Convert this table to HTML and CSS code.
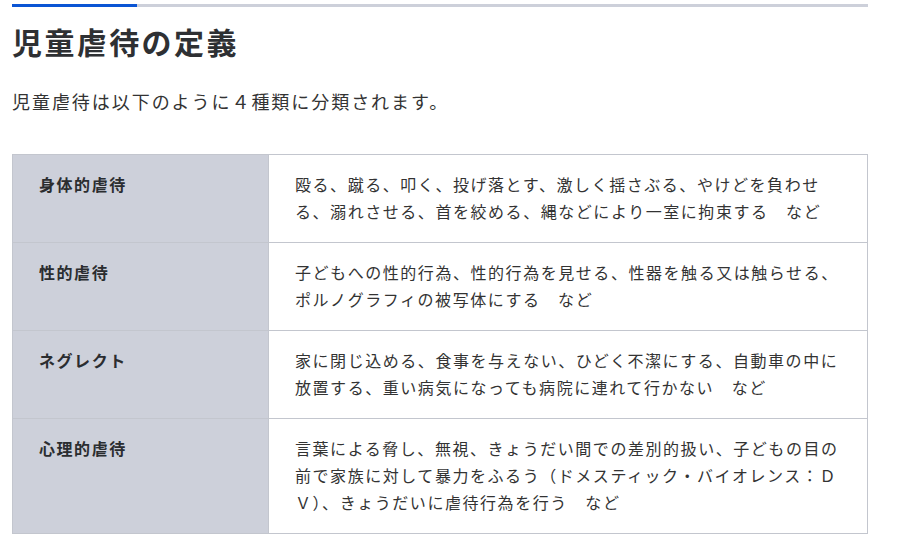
FILE: index.html
```html
<!DOCTYPE html>
<html lang="ja">
<head>
<meta charset="utf-8">
<link rel="stylesheet" href="styles.css">
</head>
<body>
<section class="page">
  <div class="bar"><span class="bar-accent"></span><span class="bar-rest"></span></div>
  <h2 class="title">児童虐待の定義</h2>
  <p class="lead">児童虐待は以下のように４種類に分類されます。</p>
  <table class="defs">
    <tr>
      <th>身体的虐待</th>
      <td>殴る、蹴る、叩く、投げ落とす、激しく揺さぶる、やけどを負わせる、溺れさせる、首を絞める、縄などにより一室に拘束する　など</td>
    </tr>
    <tr>
      <th>性的虐待</th>
      <td>子どもへの性的行為、性的行為を見せる、性器を触る又は触らせる、ポルノグラフィの被写体にする　など</td>
    </tr>
    <tr>
      <th>ネグレクト</th>
      <td>家に閉じ込める、食事を与えない、ひどく不潔にする、自動車の中に放置する、重い病気になっても病院に連れて行かない　など</td>
    </tr>
    <tr>
      <th>心理的虐待</th>
      <td>言葉による脅し、無視、きょうだい間での差別的扱い、子どもの目の前で家族に対して暴力をふるう（ドメスティック・バイオレンス：ＤＶ）、きょうだいに虐待行為を行う　など</td>
    </tr>
  </table>
</section>
</body>
</html>
```

FILE: styles.css
```css
html, body {
  margin: 0;
  padding: 0;
  background: #fff;
}
body {
  font-family: "Noto Sans CJK JP", "Noto Sans", sans-serif;
  color: #333;
}
.page {
  width: 856px;
  padding: 4px 0 0 12px;
}
.bar {
  display: flex;
  height: 3px;
}
.bar-accent {
  width: 125px;
  background: #0b55d4;
}
.bar-rest {
  flex: 1;
  background: #cdd0da;
}
.title {
  margin: 13px 0 0;
  font-size: 30px;
  line-height: 42px;
  font-weight: 700;
  letter-spacing: 2.4px;
  color: #2e3033;
}
.lead {
  margin: 25px 0 0;
  font-size: 18px;
  line-height: 29px;
  letter-spacing: 1.95px;
  color: #333;
}
.defs {
  margin-top: 38px;
  width: 856px;
  border-collapse: collapse;
  font-size: 16px;
  line-height: 27px;
  letter-spacing: 1.55px;
}
.defs th,
.defs td {
  border: 1px solid #c3c6ce;
  padding: 16px 26px 17px;
  vertical-align: top;
  text-align: left;
}
.defs th {
  width: 203px;
  background: #cdd0da;
  font-weight: 700;
  color: #2b2d30;
}
.defs td {
  color: #333;
}
```
